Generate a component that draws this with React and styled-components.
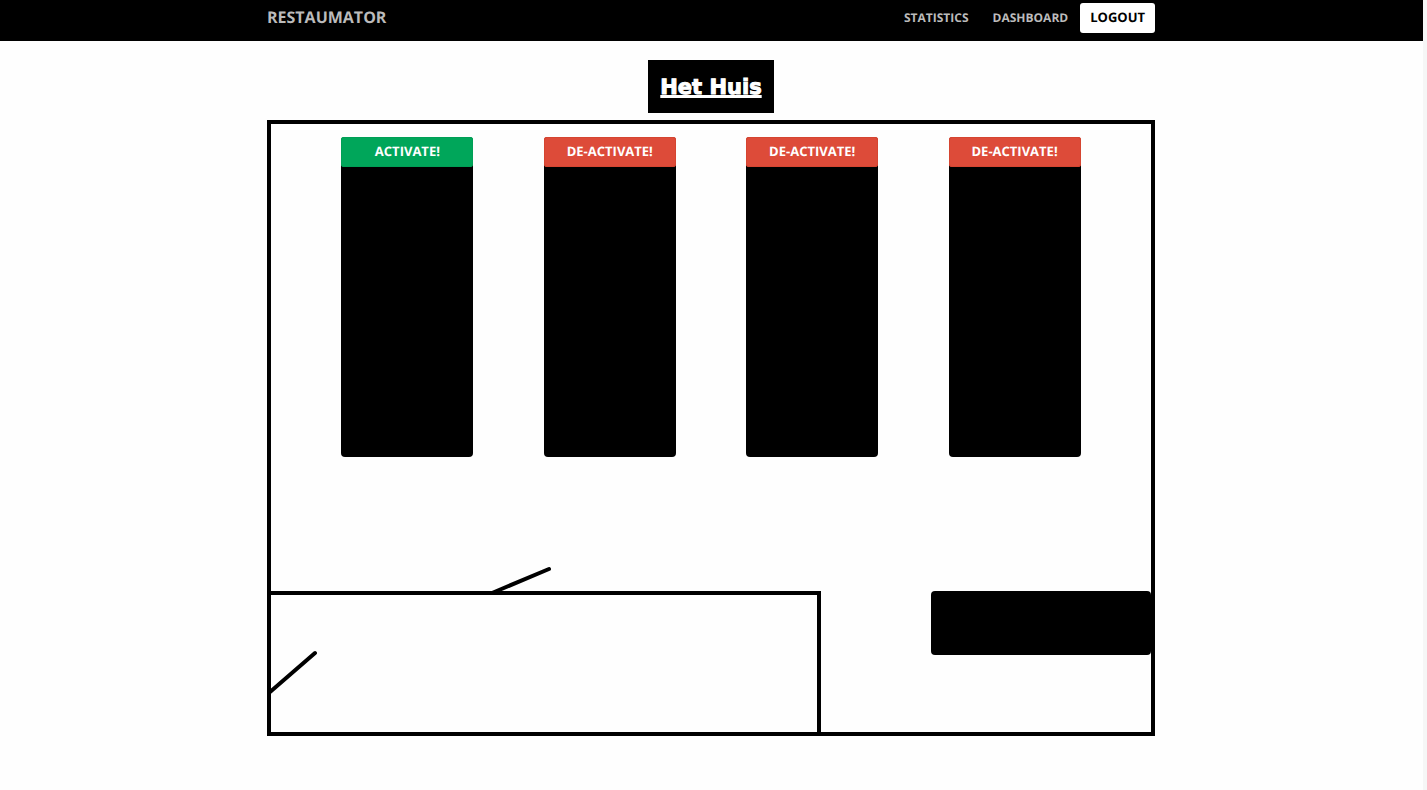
import React from "react";
import styled, { createGlobalStyle } from "styled-components";

const GlobalStyle = createGlobalStyle`
  *, *::before, *::after { box-sizing: border-box; }
  body {
    margin: 0;
    background: #fefefe;
    color: #000;
    font-family: "Open Sans", sans-serif;
    text-rendering: geometricPrecision;
  }
`;

const Page = styled.div`
  min-height: 100vh;
  border-right: 4px solid #f6f6f6;
`;

const Container = styled.div`
  width: 100%;
  max-width: 889px;
  margin: 0 auto;
  padding-right: 1px;
`;

const Header = styled.header`
  background: #000;
`;

const HeaderRow = styled(Container)`
  display: flex;
  align-items: flex-start;
  justify-content: space-between;
  padding-top: 3px;
  padding-bottom: 8px;
`;

const Brand = styled.a`
  color: #bbb;
  font-size: 16px;
  font-weight: 700;
  line-height: 28px;
  text-decoration: none;
`;

const Nav = styled.nav`
  display: flex;
  align-items: center;
`;

const NavLink = styled.a`
  padding: 0 12px;
  color: #bbb;
  font-size: 12px;
  font-weight: 700;
  line-height: 30px;
  text-decoration: none;
`;

const Button = styled.button`
  height: 30px;
  padding: 0 10px 2px;
  border: 0;
  border-radius: 3px;
  background: #fff;
  color: #000;
  font: 700 13px/28px "Open Sans", sans-serif;
  text-rendering: inherit;
  cursor: pointer;
`;

const ToggleButton = styled(Button)`
  display: block;
  width: 100%;
  background: ${({ $active }) => ($active ? "#dd4b39" : "#00a65a")};
  box-shadow: inset 0 0 0 1px ${({ $active }) => ($active ? "#d54531" : "#009f56")};
  color: #fff;
`;

const Main = styled.main`
  display: flex;
  flex-direction: column;
  padding: 19px 0 54px;
`;

const Title = styled.h1`
  align-self: center;
  margin: 0 0 7px;
  padding: 2px 12px 0;
  background: #000;
  color: #fff;
  font-family: "DejaVu Sans", sans-serif;
  font-size: 21px;
  font-weight: 700;
  line-height: 51px;
  -webkit-text-stroke: 1px #fff;
  text-decoration: underline 3px;
  text-decoration-skip-ink: none;
  text-underline-offset: 1px;
`;

const FloorPlan = styled.section`
  border: 4px solid #000;
`;

const TableRow = styled.div`
  display: flex;
  padding: 13px 0 134px;
`;

const DiningTable = styled.div`
  width: 15%;
  height: 320px;
  margin-left: 8%;
  border-radius: 4px;
  background: #000;
`;

const LowerFloor = styled.div`
  display: flex;
  align-items: flex-start;
  justify-content: space-between;
`;

const SideRoom = styled.div`
  position: relative;
  width: 550px;
  height: 141px;
  border: solid #000;
  border-width: 4px 4px 0 0;
`;

const Counter = styled.div`
  width: 25%;
  height: 64px;
  border-radius: 4px;
  background: #000;
`;

const Doors = styled.svg`
  position: absolute;
  left: -4px;
  bottom: 0;
  overflow: visible;
`;

const tables = [
  { id: 1, active: false },
  { id: 2, active: true },
  { id: 3, active: true },
  { id: 4, active: true },
];

export default function App() {
  return (
    <Page>
      <GlobalStyle />
      <Header>
        <HeaderRow>
          <Brand href="#">RESTAUMATOR</Brand>
          <Nav>
            <NavLink href="#statistics">STATISTICS</NavLink>
            <NavLink href="#dashboard">DASHBOARD</NavLink>
            <Button type="button">LOGOUT</Button>
          </Nav>
        </HeaderRow>
      </Header>
      <Container>
        <Main>
          <Title>Het Huis</Title>
          <FloorPlan>
            <TableRow>
              {tables.map(({ id, active }) => (
                <DiningTable key={id}>
                  <ToggleButton type="button" $active={active}>
                    {active ? "DE-ACTIVATE!" : "ACTIVATE!"}
                  </ToggleButton>
                </DiningTable>
              ))}
            </TableRow>
            <LowerFloor>
              <SideRoom>
                <Doors width="300" height="170" viewBox="0 0 300 170" aria-hidden="true">
                  <path d="M225 31 L282 7 M3 130 L48 91" stroke="#000" strokeWidth="4" strokeLinecap="round" />
                </Doors>
              </SideRoom>
              <Counter />
            </LowerFloor>
          </FloorPlan>
        </Main>
      </Container>
    </Page>
  );
}
